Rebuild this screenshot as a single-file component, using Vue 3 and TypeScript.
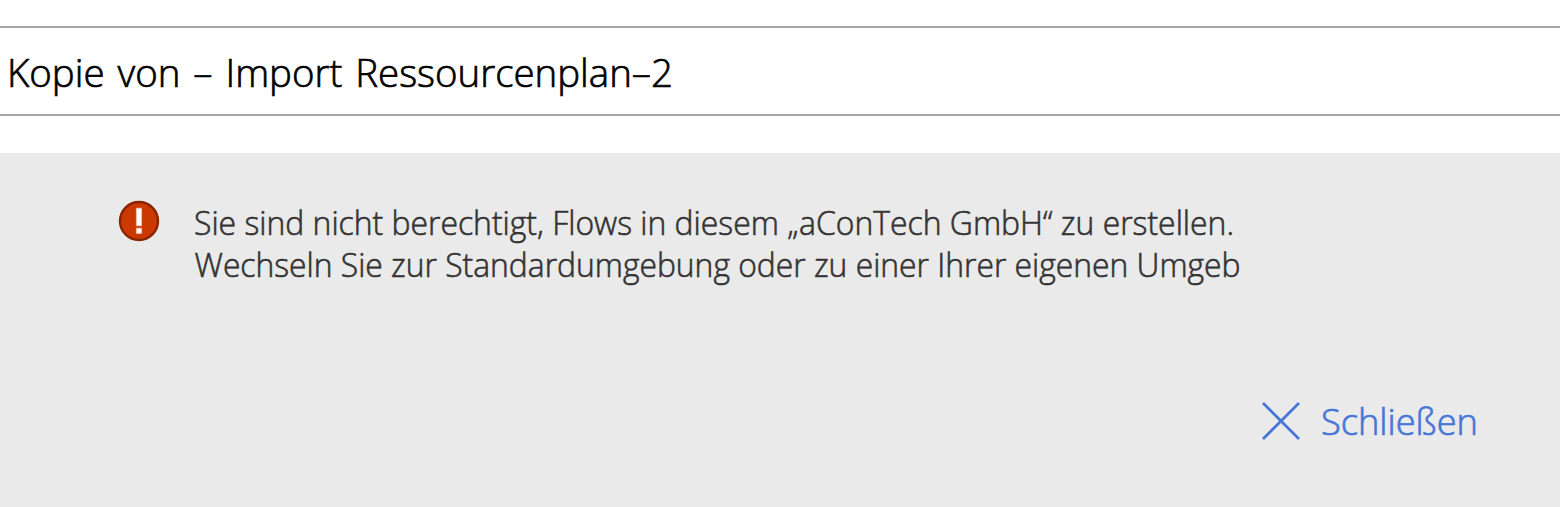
<script setup lang="ts">
const title: string = 'Kopie von – Import Ressourcenplan–2'
const lines: string[] = [
  'Sie sind nicht berechtigt, Flows in diesem „aConTech GmbH“ zu erstellen.',
  'Wechseln Sie zur Standardumgebung oder zu einer Ihrer eigenen Umgeb',
]
</script>

<template>
  <main class="page">
    <header class="name"><svg class="title" width="1560" height="84"><text x="7" y="59" textLength="666" lengthAdjust="spacingAndGlyphs">{{ title }}</text></svg></header>
    <section class="notice">
      <div class="message">
        <svg class="alert" viewBox="0 0 42 42"><circle cx="21" cy="21" r="19" /><path d="M18.4 8.2h5.2v17.6h-5.2zM18.4 28.2h5.2v5.2h-5.2z" /></svg>
        <svg class="copy" width="1240" height="100">
          <text x="-1" y="35" textLength="1040" lengthAdjust="spacingAndGlyphs">{{ lines[0] }}</text>
          <text x="-0.5" y="77" textLength="1046" lengthAdjust="spacingAndGlyphs">{{ lines[1] }}</text>
        </svg>
      </div>
      <button class="close" type="button">
        <svg class="cross" viewBox="0 0 40 40"><path d="M2 2L38 38M38 2L2 38" /></svg>
        <svg class="label" width="160" height="56"><text x="-1" y="42" textLength="157" lengthAdjust="spacingAndGlyphs">Schließen</text></svg>
      </button>
    </section>
  </main>
</template>

<style>
body { margin: 0; background: #fff; }
</style>
<style scoped>
.page { height: 507px; padding-top: 26px; box-sizing: border-box; overflow: hidden; font-family: "Open Sans", "Noto Sans", sans-serif; font-weight: 300; background: #fff; }
.page svg { display: block; flex-shrink: 0; overflow: visible; }
.name { height: 90px; box-sizing: border-box; border: solid #a6a6a6; border-width: 2px 0; }
.title { font-size: 39px; fill: #000; word-spacing: 3px; }
.notice { margin-top: 37px; height: 354px; background: #eaeaea; box-sizing: border-box; padding: 47px 78px 0 118px; }
.message { display: flex; height: 193px; }
.alert { width: 42px; height: 42px; margin-right: 35px; }
.alert circle { fill: #cc3900; stroke: #8a2300; stroke-width: 2.4; }
.alert path { fill: #fff; stroke: #f3c4b0; stroke-width: 0.7; }
.copy { font-size: 32.5px; fill: #333; }
.close { display: flex; align-items: center; margin: 0 0 0 auto; padding: 0; border: 0; background: none; gap: 21px; color: #4576d8; font-family: inherit; font-weight: inherit; }
.cross { width: 40px; height: 40px; }
.cross path { fill: none; stroke: currentColor; stroke-width: 2.7; }
.label { font-size: 37px; fill: currentColor; }
.title text { stroke: #000; stroke-width: 0.7px; }
.copy text { stroke: #333; stroke-width: 0.6px; }
.label text { stroke: currentColor; stroke-width: 0.7px; }
</style>
